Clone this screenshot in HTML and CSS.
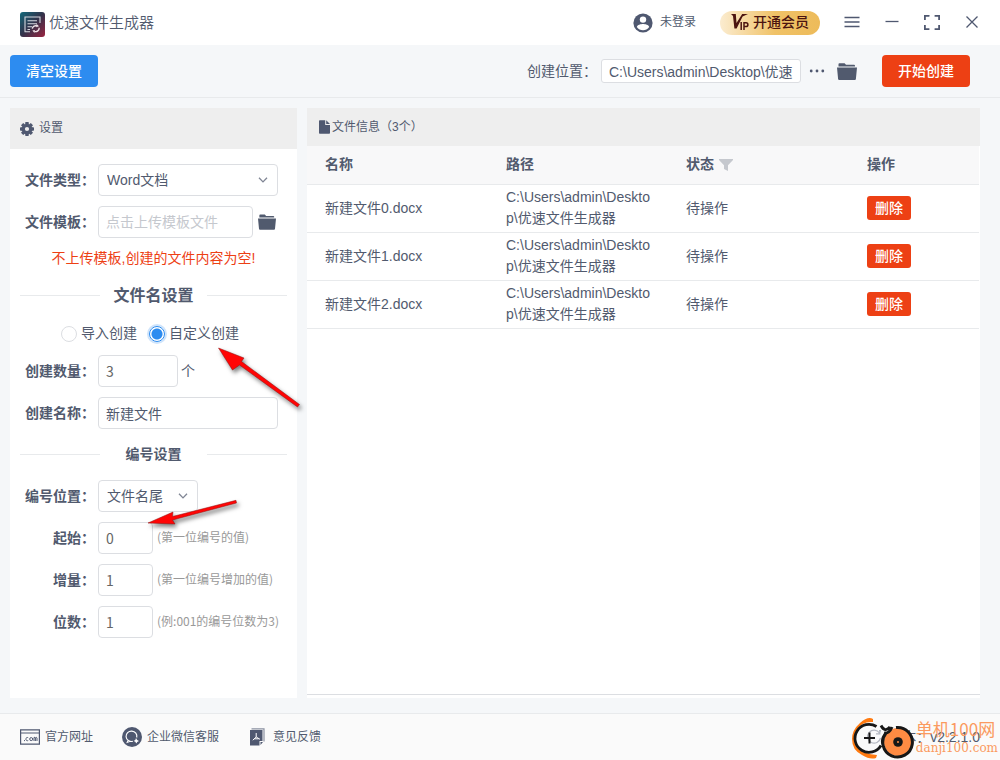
FILE: index.html
```html
<!DOCTYPE html>
<html lang="zh-CN">
<head>
<meta charset="utf-8">
<meta name="viewport" content="width=device-width, initial-scale=1">
<title>优速文件生成器</title>
<link rel="stylesheet" href="styles.css">
</head>
<body>
<svg class="defs" width="0" height="0" aria-hidden="true">
  <symbol id="folder" viewBox="0 0 20 17"><path d="M1.5 1.2Q1.5.3 2.4.3H7.6L9 1.8H17Q18 1.8 18 2.8V3.4H1.5zM0 4.6H20L18.9 16Q18.8 17 17.8 17H2.2Q1.2 17 1.1 16z" fill="currentColor"/></symbol>
  <symbol id="chevron" viewBox="0 0 10 6"><path d="M1 .8 5 4.9 9 .8" fill="none" stroke="currentColor" stroke-width="1.3"/></symbol>
</svg>
<header class="titlebar">
  <svg class="logo" width="25" height="25" viewBox="0 0 25 25">
    <defs><linearGradient id="lg" x1="0" y1="0" x2="1" y2="1"><stop offset="0" stop-color="#126a7c"/><stop offset=".5" stop-color="#33324a"/><stop offset="1" stop-color="#9c2440"/></linearGradient></defs>
    <rect width="25" height="25" rx="3" fill="url(#lg)"/>
    <path d="M10 19.8H5V5H20V11M7.5 8.8H17M7.5 11.8H17M7.5 14.8H12M7.5 17.5H10" fill="none" stroke="#d5d8de" stroke-width="1.1"/>
    <path d="M12.3 16.6A3.6 3.6 0 0 1 17 13.9M19.2 15.8A3.6 3.6 0 0 1 14.4 19.4" fill="none" stroke="#f0e4e8" stroke-width="1.4"/>
    <path d="M16.6 12 19 14.2 16.2 15.2zM14.9 18 12.4 18.6 14.4 21z" fill="#f0e4e8"/>
  </svg>
  <h1 class="app-name">优速文件生成器</h1>
  <button class="plain user" type="button">
    <svg width="20" height="20" viewBox="0 0 20 20"><circle cx="10" cy="10" r="9.6" fill="#4f5870"/><circle cx="10" cy="6.6" r="3.2" fill="#fff"/><path d="M3.8 14C4.4 11.8 7.8 11 10 11S15.6 11.8 16.2 14C14.6 16.2 12.4 17.3 10 17.3S5.4 16.2 3.8 14z" fill="#fff"/></svg>
    <span>未登录</span>
  </button>
  <button class="vip" type="button">
    <svg width="18" height="17" viewBox="0 0 18 17"><path d="M0 0H4.8L5.5 9 11.2 0H17L11.6 2.6 5.6 14.6H3.4L2 2z" fill="#4b1410"/><path d="M10.2 8V16M13 16V8.8H15A1.9 1.9 0 0 1 15 12.6H13" fill="none" stroke="#4b1410" stroke-width="1.5"/></svg>
    <span>开通会员</span>
  </button>
  <div class="window-tools">
    <button class="plain" type="button" aria-label="菜单"><svg width="16" height="16" viewBox="0 0 16 16"><path d="M.5 2.5H15.5M.5 7H15.5M.5 11.5H15.5" stroke="#4f5870" stroke-width="1.3"/></svg></button>
    <button class="plain" type="button" aria-label="最小化"><svg width="16" height="16" viewBox="0 0 16 16"><path d="M1.5 6.5H14.5" stroke="#4f5870" stroke-width="1.3"/></svg></button>
    <button class="plain" type="button" aria-label="最大化"><svg width="16" height="16" viewBox="0 0 16 16"><path d="M5 .2V0M5.4 .9H.9V5M10.6 .9H15.1V5M5.4 14.1H.9V10M10.6 14.1H15.1V10" fill="none" stroke="#4f5870" stroke-width="1.8"/></svg></button>
    <button class="plain" type="button" aria-label="关闭"><svg width="16" height="16" viewBox="0 0 16 16"><path d="M2.5 1.5 13.5 12.5M13.5 1.5 2.5 12.5" stroke="#4f5870" stroke-width="1.3"/></svg></button>
  </div>
</header>

<div class="toolbar">
  <button class="btn btn-primary" type="button">清空设置</button>
  <label class="path-label" for="path">创建位置：</label>
  <input class="field path" id="path" type="text" value="C:\Users\admin\Desktop\优速">
  <button class="plain more" type="button" aria-label="更多"><svg width="16" height="16" viewBox="0 0 16 16"><g fill="#4f5870"><circle cx="2.2" cy="8" r="1.4"/><circle cx="8" cy="8" r="1.4"/><circle cx="13.8" cy="8" r="1.4"/></g></svg></button>
  <button class="plain open" type="button" aria-label="打开文件夹"><svg width="20" height="17"><use href="#folder"/></svg></button>
  <button class="btn btn-danger" type="button">开始创建</button>
</div>

<main class="main">
  <section class="panel settings">
    <h2 class="panel-head settings-head">
      <svg width="14" height="14" viewBox="0 0 14 14"><circle cx="7" cy="7" r="3.7" fill="none" stroke="#4f5870" stroke-width="3.2"/><path d="M5.4 0H8.6L8.9 2.4H5.1zM5.4 14H8.6L8.9 11.6H5.1zM0 5.4V8.6L2.4 8.9V5.1zM14 5.4V8.6L11.6 8.9V5.1zM1 3.2 3.2 1 5 2.5 2.5 5zM13 3.2 10.8 1 9 2.5 11.5 5zM1 10.8 3.2 13 5 11.5 2.5 9zM13 10.8 10.8 13 9 11.5 11.5 9z" fill="#4f5870"/></svg>
      设置
    </h2>
    <form class="form">
      <div class="row">
        <label class="name" for="type">文件类型：</label>
        <div class="select wide"><select class="field" id="type"><option>Word文档</option></select><svg width="10" height="6"><use href="#chevron"/></svg></div>
      </div>
      <div class="row">
        <label class="name" for="tpl">文件模板：</label>
        <input class="field template" id="tpl" type="text" placeholder="点击上传模板文件">
        <button class="plain pick" type="button" aria-label="选择模板"><svg width="18" height="16"><use href="#folder"/></svg></button>
      </div>
      <p class="warning">不上传模板,创建的文件内容为空!</p>
      <h3 class="divider divider-main"><span>文件名设置</span></h3>
      <div class="radios">
        <label><input type="radio" name="mode">导入创建</label>
        <label><input type="radio" name="mode" checked>自定义创建</label>
      </div>
      <div class="row">
        <label class="name" for="count">创建数量：</label>
        <input class="field num count" id="count" type="text" value="3"><span class="unit">个</span>
      </div>
      <div class="row">
        <label class="name" for="fname">创建名称：</label>
        <input class="field wide" id="fname" type="text" value="新建文件">
      </div>
      <h3 class="divider divider-sub"><span>编号设置</span></h3>
      <div class="row">
        <label class="name" for="pos">编号位置：</label>
        <div class="select narrow"><select class="field" id="pos"><option>文件名尾</option></select><svg width="10" height="6"><use href="#chevron"/></svg></div>
      </div>
      <div class="row">
        <label class="name" for="start">起始：</label>
        <input class="field num small" id="start" type="text" value="0"><span class="hint">(第一位编号的值)</span>
      </div>
      <div class="row">
        <label class="name" for="step">增量：</label>
        <input class="field num small" id="step" type="text" value="1"><span class="hint">(第一位编号增加的值)</span>
      </div>
      <div class="row">
        <label class="name" for="digits">位数：</label>
        <input class="field num small" id="digits" type="text" value="1"><span class="hint">(例:001的编号位数为3)</span>
      </div>
    </form>
    <svg class="arrows" width="300" height="440" viewBox="0 0 300 440" aria-hidden="true">
      <g fill="#ff0505" stroke="#8c1010" stroke-width=".5">
        <path d="M208.500 240 234 250 231.500 253.500 289.500 296.500 287.500 299 229.500 257 222.500 262z"/>
        <path d="M138 415 163 404 162.500 408.500 226 392.300 226.500 395 162.500 412 165 416z"/>
      </g>
    </svg>
  </section>

  <section class="panel files">
    <h2 class="panel-head files-head">
      <svg width="11" height="14" viewBox="0 0 11 14"><path d="M0 1Q0 .3.8.3H6.2V5H11V13Q11 13.7 10.2 13.7H.8Q0 13.7 0 13zM7.2.3 11 4H7.2z" fill="#4f5870"/></svg>
      文件信息（3个）
    </h2>
    <div class="table-wrap">
      <table class="table">
        <colgroup><col class="c-name"><col class="c-path"><col class="c-state"><col></colgroup>
        <thead><tr><th>名称</th><th>路径</th><th>状态<svg class="filter" width="14" height="12" viewBox="0 0 14 12"><path d="M0 0H14V1L9 6.2V12L5 10V6.2L0 1z" fill="#c5c8ce"/></svg></th><th>操作</th></tr></thead>
        <tbody>
          <tr><td>新建文件0.docx</td><td>C:\Users\admin\Desktop\优速文件生成器</td><td>待操作</td><td><button class="delete" type="button">删除</button></td></tr>
          <tr><td>新建文件1.docx</td><td>C:\Users\admin\Desktop\优速文件生成器</td><td>待操作</td><td><button class="delete" type="button">删除</button></td></tr>
          <tr><td>新建文件2.docx</td><td>C:\Users\admin\Desktop\优速文件生成器</td><td>待操作</td><td><button class="delete" type="button">删除</button></td></tr>
        </tbody>
      </table>
    </div>
  </section>
</main>

<footer class="footer">
  <a href="#site"><svg width="20" height="16" viewBox="0 0 20 16"><path d="M.6.8H19.4V15.2H.6zM.6 4H19.4" fill="none" stroke="#4f5870" stroke-width="1.2"/><path d="M4 11.6H5M8.2 8.7A1.6 1.6 0 1 0 8.2 11.5M14 12V8.5Q15.2 7.8 15.4 9V12M15.4 9Q16.8 7.7 17 9V12" fill="none" stroke="#4f5870"/><circle cx="11.2" cy="10.1" r="1.5" fill="none" stroke="#4f5870"/></svg>官方网址</a>
  <a class="wechat" href="#service"><svg width="20" height="20" viewBox="0 0 20 20"><circle cx="10" cy="10" r="10" fill="#4f5870"/><path d="M14.700 10.500A5.400 5.200 0 1 0 10.800 14.300M6.300 13 5.300 15.300 8.300 14.200" fill="none" stroke="#fff" stroke-width="1.2"/><path d="M14 11 15.200 13 17 14 15.200 14.900 14.300 16.600 13.300 14.800 11.600 13.900 13.300 13z" fill="#fff"/></svg>企业微信客服</a>
  <a class="feedback" href="#feedback"><svg width="15" height="18" viewBox="0 0 15 18"><path d="M1.500 .8H14V13.500" fill="none" stroke="#8b91a1" stroke-width="1.200"/><path d="M0 2H12.500V13H9.500V17.500H0zM10.500 14H13L10.500 17z" fill="#4f5870"/><path d="M6.200 5V9L2.800 12.200M6.200 9 10 11.300M4.300 10.800H8.800" fill="none" stroke="#fff"/></svg>意见反馈</a>
  <div class="version"><svg width="16" height="16" viewBox="0 0 16 16"><path d="M13.500 4A6.500 6.500 0 1 0 14.500 9M13.800 1V4.800H10" fill="none" stroke="#4f5870" stroke-width="1.300"/></svg><span>版本：v2.2.1.0</span></div>
  <div class="watermark">
    <svg width="65" height="44" viewBox="0 0 65 44">
      <circle cx="17" cy="22" r="14" fill="#fafafa" fill-opacity=".6"/>
      <path d="M22 3Q17 0 9 7 1 14 1 23 1 34 11 39 19 44 25 42L26 39Q13 38 7 31 2 24 6 14 11 5 22 6z" fill="#ff7a10"/>
      <path d="M25.500 10.500A14 14 0 1 0 30 29.500M30 9.500Q34 17 39 11" fill="none" stroke="#171717" stroke-width="2.800"/>
      <path d="M13 22H24M18.500 16.500V27.500" stroke="#171717" stroke-width="2"/>
      <circle cx="47" cy="26" r="14" fill="#ff8b43"/>
      <path d="M45 11.500A14.800 14.800 0 1 1 35 17Q30 23 32 29M33 17Q38 18 41 11" fill="none" stroke="#171717" stroke-width="3"/>
      <circle cx="47" cy="26" r="4.800" fill="#171717"/><circle cx="47" cy="26" r="1" fill="#ff8b43"/>
    </svg>
    <div class="watermark-text"><span class="wm-name">单机100网</span><span class="wm-url">danji100.com</span></div>
  </div>
</footer>
</body>
</html>
```
FILE: styles.css
```css
* { box-sizing: border-box; }
body {
  margin: 0;
  min-height: 100vh;
  display: flex;
  flex-direction: column;
  background: #f5f7f9;
  color: #515a6e;
  font: 14px/21px "Liberation Sans", "Noto Sans CJK SC", sans-serif;
}
button, input, select { font: inherit; color: inherit; }
h1, h2, h3, p { margin: 0; }
svg { display: block; flex: none; }
.defs { position: absolute; }
button { cursor: pointer; }
.plain { display: flex; align-items: center; border: 0; padding: 0; background: none; }

.titlebar { display: flex; align-items: center; height: 45px; padding: 0 20px; background: #fff; }
.logo { margin-top: 4px; }
.app-name { margin: 0 auto 0 4px; font-size: 15px; font-weight: 350; }
.user { gap: 7px; font-size: 12px; }
.vip {
  display: flex; align-items: center; justify-content: center; gap: 4px;
  width: 100px; height: 24px; margin: 0 24px; padding: 0;
  border: 0; border-radius: 12px;
  background: linear-gradient(90deg, #fbecd0, #f0c267 55%, #edbb5a);
  color: #4b1410; font-size: 14px; font-weight: 500;
}
.window-tools { display: flex; gap: 24px; }

.toolbar { display: flex; align-items: center; height: 53px; padding: 0 30px 0 10px; border-bottom: 1px solid #e8eaec; }
.btn { width: 88px; height: 32px; border: 0; border-radius: 4px; padding: 0; color: #fff; font-weight: 500; }
.btn-primary { background: #2d8cf0; }
.btn-danger { background: #ed4014; }
.path-label { margin-left: auto; }
.field {
  height: 32px; min-width: 0; padding: 0 7px;
  border: 1px solid #dcdee2; border-radius: 4px;
  background: #fff; outline: 0;
}
.field::placeholder { color: #c5c8ce; opacity: 1; }
.path { width: 200px; height: 24px; margin-left: 4px; border-radius: 3px; }
.more { margin: 0 12px 0 8px; }
.open { margin-right: 25px; }

.main {
  flex: 1;
  display: grid;
  grid-template-columns: 287px minmax(0, 1fr);
  gap: 10px;
  padding: 10px 20px 15px 10px;
}
.panel { position: relative; display: flex; flex-direction: column; background: #fff; }
.panel-head { display: flex; align-items: center; background: #eee; font-size: 12px; font-weight: 400; }
.settings-head { height: 41px; padding: 0 10px; gap: 5px; }
.files-head { height: 38px; padding: 0 12px; gap: 2px; }

.form { display: flex; flex-direction: column; gap: 10px; padding: 15px 10px; }
.row { display: flex; align-items: center; }
.name { width: 75px; margin-right: 3px; text-align: right; font-weight: 700; white-space: nowrap; }
.select { position: relative; }
.select select { width: 100%; padding-left: 8px; appearance: none; }
.select svg { position: absolute; right: 10px; top: 13px; pointer-events: none; color: #808695; }
.wide { width: 180px; }
.narrow { width: 100px; }
.template { width: 155px; }
.pick { margin-left: 5px; }
.count { width: 80px; }
.small { width: 55px; }
.num { font-family: "Noto Sans CJK SC", sans-serif; color: #666; }
.unit { margin-left: 3px; }
.hint { margin-left: 4px; padding-bottom: 3px; font-size: 12px; color: #999; white-space: nowrap; font-family: "Noto Sans CJK SC", sans-serif; }
.warning { line-height: 20px; text-align: center; color: #ed4014; }
.divider { display: grid; grid-template-columns: 80px 1fr 80px; align-items: center; text-align: center; font-weight: 700; }
.divider::before, .divider::after { content: ""; border-top: 1px solid #e8eaec; }
.divider-main { height: 34px; font-size: 16px; }
.divider-sub { height: 31px; font-size: 14px; }
.radios { display: flex; justify-content: center; gap: 12px; height: 23px; padding-right: 7px; }
.radios label { display: flex; align-items: center; gap: 4px; }
.radios input { appearance: none; width: 16px; height: 16px; margin: 0; border: 1px solid #dcdee2; border-radius: 50%; background: #fff; }
.radios input:checked { border-color: #2d8cf0; background: radial-gradient(circle, #2d8cf0 5px, #fff 6px); box-shadow: 0 0 0 2px #cfe4fb; }
.arrows { position: absolute; left: 0; top: 0; overflow: visible; pointer-events: none; filter: drop-shadow(2px 3px 2px rgba(0, 0, 0, .5)); }

.table-wrap { flex: 1; margin-bottom: 3px; border-bottom: 1px solid #dcdee2; }
.table { width: 100%; table-layout: fixed; border-collapse: separate; border-spacing: 0; padding-right: 1px; }
.c-name, .c-state { width: 181px; }
.c-path { width: 180px; }
.table th, .table td { padding: 2px 18px 3px; border-bottom: 1px solid #e8eaec; text-align: left; word-break: break-all; }
.table th { height: 39px; background: #f8f8f9; font-weight: 700; }
.table td { height: 48px; }
.table td:nth-child(2) { padding-right: 14px; }
.filter { display: inline-block; margin-left: 5px; vertical-align: -2px; }
.delete { display: block; width: 44px; height: 24px; padding: 0; border: 0; border-radius: 3px; background: #ed4014; color: #fff; font-weight: 500; }

.footer { position: relative; display: flex; align-items: center; height: 47px; padding: 0 20px; border-top: 1px solid #e8eaec; background: #fafafa; font-size: 12px; }
.footer a { display: flex; align-items: center; gap: 5px; color: inherit; text-decoration: none; }
.footer .wechat { margin: 0 31px 0 29px; }
.footer .feedback { gap: 8px; }
.version { display: flex; align-items: center; gap: 6px; margin-left: auto; font-size: 14px; }
.watermark { position: absolute; right: 2px; bottom: 0; display: flex; align-items: center; color: #fb9a60; }
.watermark-text { display: flex; flex-direction: column; }
.wm-name { font-family: "Noto Sans CJK SC", sans-serif; font-size: 17px; line-height: 20px; }
.wm-url { font-family: "DejaVu Serif", serif; font-size: 12px; line-height: 18px; }
```
